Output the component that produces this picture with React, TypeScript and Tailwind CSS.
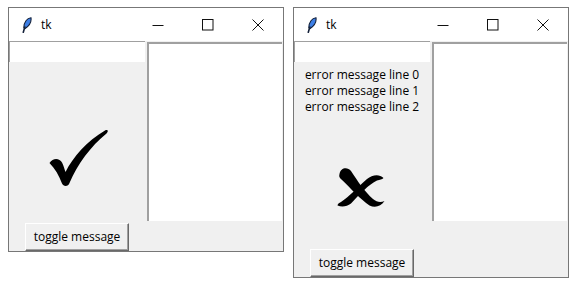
import React from 'react'

const font = { fontFamily: '"Open Sans", "Noto Sans", sans-serif' }

function Feather() {
  return (
    <svg width="10" height="16" viewBox="0 0 10 16">
      <path d="M9 0.8 C5 1.2 2 5 1.8 10.5 L2.8 11.8 C7 9 9.6 5 9 0.8 Z" fill="#3d7fe6" stroke="#14213a" strokeWidth="1.1" />
      <path d="M2.8 10 L1.3 15.3" stroke="#14213a" strokeWidth="1.6" strokeLinecap="round" />
    </svg>
  )
}

function TitleBar() {
  return (
    <div className="h-[33px] bg-white flex items-center shrink-0">
      <div className="ml-[13px] mt-[1px] flex items-center">
        <Feather />
      </div>
      <span className="ml-[9px] text-[12px] text-black" style={font}>tk</span>
      <div className="ml-auto flex h-full">
        <div className="w-[50px] h-full flex items-center justify-center">
          <svg width="12" height="12" viewBox="0 0 12 12">
            <path d="M0.5 6.5 H11.5" stroke="#111" strokeWidth="1" />
          </svg>
        </div>
        <div className="w-[50px] h-full flex items-center justify-center">
          <svg width="12" height="12" viewBox="0 0 12 12">
            <rect x="0.5" y="0.5" width="10.5" height="10.5" fill="none" stroke="#111" strokeWidth="1" />
          </svg>
        </div>
        <div className="w-[50px] h-full flex items-center justify-center">
          <svg width="12" height="12" viewBox="0 0 12 12">
            <path d="M0.5 0.5 L11.5 11.5 M11.5 0.5 L0.5 11.5" stroke="#111" strokeWidth="1" />
          </svg>
        </div>
      </div>
    </div>
  )
}

function Entry() {
  return <div className="h-[21px] bg-white border-t border-l border-[#a0a0a0]" />
}

function TextBox() {
  return (
    <div className="mt-[1px] ml-[2px] w-[135px] h-[179px] bg-white border-t-2 border-l-2 border-t-[#a0a0a0] border-l-[#a0a0a0]" />
  )
}

function ToggleButton() {
  return (
    <div className="flex justify-center w-[136px]">
      <button
        className="w-[104px] h-[28px] bg-[#f0f0f0] text-[12px] text-black border border-t-white border-l-white border-r-[#696969] border-b-[#696969] shadow-[inset_-1px_-1px_0_#a0a0a0]"
        style={font}
      >
        toggle message
      </button>
    </div>
  )
}

function Check() {
  return (
    <svg width="60" height="58" viewBox="0 0 60 58">
      <path
        d="M0.5 34 C4 28.5 10.5 29 13 33.5 C14.5 36.5 15.5 40 16.5 43 C24 28 38 12 56 1.5 C58.5 0.2 60 2 57.5 4.5 C42 17 28.5 35 20.5 54 C19.5 57.5 14.5 58 13 54.5 C10 46.5 6 39.5 0.5 34 Z"
        fill="#000"
      />
    </svg>
  )
}

function Cross() {
  return (
    <svg width="48" height="41" viewBox="0 0 48 41">
      <path
        d="M2.5 7 C3.5 0.5 10.5 -0.5 14 4 C20.5 14 28 25 36 32 C40 35.5 44 35.5 47.5 34 C44 39.5 38 41 32.5 38.5 C23.5 32.5 13.5 21 4.5 12.5 C2 10.5 2 9 2.5 7 Z"
        fill="#000"
      />
      <path
        d="M46.5 11 C42 6.5 35 8 30 12 C22 19 12 30 4 35 C2 36 0.5 37 0.5 38.5 C5 40.5 10 39.5 14 36.5 C22 28 32 17 40 13.5 C43 12.5 45 12.5 46.5 11 Z"
        fill="#000"
      />
    </svg>
  )
}

function Window({ error }: { error: boolean }) {
  return (
    <div className="w-[276px] border border-[#777777] bg-[#f0f0f0] flex flex-col">
      <TitleBar />
      <div className="flex">
        <div className="w-[136px] flex flex-col">
          <Entry />
          {error ? (
            <div className="h-[187px] flex flex-col items-center">
              <div className="mt-[5px] text-[12px] leading-[16px] text-black text-center" style={font}>
                <div>error message line 0</div>
                <div>error message line 1</div>
                <div>error message line 2</div>
              </div>
              <div className="mt-[52px] mr-[3px]">
                <Cross />
              </div>
            </div>
          ) : (
            <div className="h-[161px] flex justify-center">
              <div className="mt-[67px] mr-[-4px]">
                <Check />
              </div>
            </div>
          )}
        </div>
        <TextBox />
      </div>
      <ToggleButton />
    </div>
  )
}

export default function App() {
  return (
    <div className="w-[578px] h-[288px] bg-white flex items-start gap-[9px] pl-[8px] pt-[7px]">
      <Window error={false} />
      <Window error={true} />
    </div>
  )
}
